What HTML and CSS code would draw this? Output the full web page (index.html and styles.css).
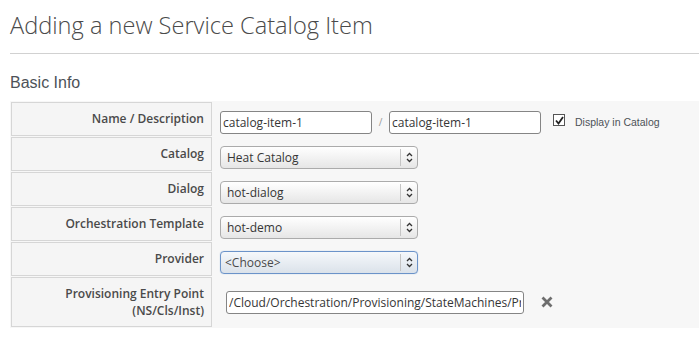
FILE: index.html
```html
<!DOCTYPE html>
<html lang="en">
<head>
    <meta charset="UTF-8">
    <title>Adding a new Service Catalog Item</title>
    <link rel="stylesheet" href="styles.css">
</head>
<body>
    <div class="page">
        <h1 class="page-title">Adding a new Service Catalog Item</h1>

        <h3 class="section-title">Basic Info</h3>

        <table class="form-table">
            <tr>
                <td class="key">Name / Description</td>
                <td class="value">
                    <div class="field-row">
                        <input class="text-input short" type="text" value="catalog-item-1">
                        <span class="slash">/</span>
                        <input class="text-input short" type="text" value="catalog-item-1">
                        <span class="checkbox"><svg width="9" height="9" viewBox="0 0 9 9"><path d="M1 4.5 L3.5 7.5 L8 1" fill="none" stroke="#222" stroke-width="1.8"/></svg></span>
                        <span class="checkbox-label">Display in Catalog</span>
                    </div>
                </td>
            </tr>
            <tr>
                <td class="key">Catalog</td>
                <td class="value">
                    <div class="select-box">
                        <span class="select-text">Heat Catalog</span>
                        <span class="select-arrow"><svg width="7" height="11" viewBox="0 0 7 11"><path d="M1 4 L3.5 1.5 L6 4 M1 7 L3.5 9.5 L6 7" fill="none" stroke="#333" stroke-width="1.3"/></svg></span>
                    </div>
                </td>
            </tr>
            <tr>
                <td class="key">Dialog</td>
                <td class="value">
                    <div class="select-box">
                        <span class="select-text">hot-dialog</span>
                        <span class="select-arrow"><svg width="7" height="11" viewBox="0 0 7 11"><path d="M1 4 L3.5 1.5 L6 4 M1 7 L3.5 9.5 L6 7" fill="none" stroke="#333" stroke-width="1.3"/></svg></span>
                    </div>
                </td>
            </tr>
            <tr>
                <td class="key">Orchestration Template</td>
                <td class="value">
                    <div class="select-box">
                        <span class="select-text">hot-demo</span>
                        <span class="select-arrow"><svg width="7" height="11" viewBox="0 0 7 11"><path d="M1 4 L3.5 1.5 L6 4 M1 7 L3.5 9.5 L6 7" fill="none" stroke="#333" stroke-width="1.3"/></svg></span>
                    </div>
                </td>
            </tr>
            <tr>
                <td class="key">Provider</td>
                <td class="value">
                    <div class="select-box focused">
                        <span class="select-text">&lt;Choose&gt;</span>
                        <span class="select-arrow"><svg width="7" height="11" viewBox="0 0 7 11"><path d="M1 4 L3.5 1.5 L6 4 M1 7 L3.5 9.5 L6 7" fill="none" stroke="#333" stroke-width="1.3"/></svg></span>
                    </div>
                </td>
            </tr>
            <tr class="tall">
                <td class="key">Provisioning Entry Point<br>(NS/Cls/Inst)</td>
                <td class="value">
                    <div class="field-row entry-point">
                        <input class="text-input long" type="text" value="/Cloud/Orchestration/Provisioning/StateMachines/Provision/CatalogItemInitialization">
                        <span class="clear-icon"><svg width="12" height="12" viewBox="0 0 12 12"><path d="M1.5 1.5 L10.5 10.5 M10.5 1.5 L1.5 10.5" stroke="#6e6e6e" stroke-width="2.8"/></svg></span>
                    </div>
                </td>
            </tr>
        </table>
    </div>
</body>
</html>
```

FILE: styles.css
```css
* {
    box-sizing: border-box;
}

body {
    margin: 0;
    background: #fff;
    color: #363636;
    font-family: 'Open Sans', 'Liberation Sans', sans-serif;
    font-size: 12px;
}

.page {
    padding-left: 10px;
}

.page-title {
    margin: 0;
    padding: 12px 0 15px;
    font-size: 23.6px;
    font-weight: 300;
    line-height: 26px;
    color: #4a4a4a;
    border-bottom: 1px solid #d1d1d1;
}

.section-title {
    margin: 19px 0 8px;
    font-family: 'Liberation Sans', Arial, sans-serif;
    font-size: 16px;
    font-weight: 400;
    line-height: 20px;
    color: #4d5258;
}

.form-table {
    width: 100%;
    border-collapse: separate;
    border-spacing: 1px;
    background: #f7f7f7;
}

.form-table td {
    padding: 0;
}

.form-table .key {
    width: 201px;
    height: 34px;
    padding: 7px 7px 8px;
    border: 1px solid #d6d6d6;
    background: #f5f5f5;
    text-align: right;
    vertical-align: top;
    font-weight: 600;
    line-height: 17px;
    color: #4a4a4a;
}

.form-table .value {
    padding: 9px 7px 2px;
    vertical-align: top;
}

.form-table .tall .key {
    padding-bottom: 7px;
}

.form-table .tall .value {
    padding: 2px 7px;
    vertical-align: middle;
}

.field-row {
    display: flex;
    align-items: flex-start;
}

.text-input {
    height: 23px;
    padding: 0 2px;
    border: 1px solid #858585;
    border-radius: 3px;
    background: #fff;
    font-family: 'Open Sans', sans-serif;
    font-size: 12px;
    color: #363636;
    outline: none;
}

.text-input.short {
    width: 152px;
}

.text-input.long {
    width: 298px;
}

.slash {
    width: 17px;
    text-align: center;
    font-size: 10px;
    line-height: 23px;
    color: #999;
}

.checkbox {
    display: flex;
    align-items: center;
    justify-content: center;
    width: 12px;
    height: 12px;
    margin: 3px 10px 0 12px;
    border: 1px solid #555;
    background: #fff;
}

.checkbox-label {
    margin-top: 4px;
    font-family: 'Liberation Sans', Arial, sans-serif;
    font-size: 10.5px;
    line-height: 14px;
    color: #4d5258;
}

.select-box {
    display: flex;
    width: 198px;
    height: 23px;
    border: 1px solid #ababab;
    border-radius: 4px;
    background: linear-gradient(#ffffff, #e6e6e6);
    line-height: 21px;
}

.select-box.focused {
    border-color: #6b93c9;
    background: linear-gradient(#f5f8fb, #dbe2ea);
    box-shadow: 0 0 1px #8fb4e0;
}

.select-text {
    flex: 1;
    padding-left: 6px;
    color: #363636;
}

.select-box.focused .select-text {
    padding-left: 4px;
    color: #4a4a4a;
}

.select-arrow {
    display: flex;
    align-items: center;
    justify-content: center;
    width: 17px;
    margin: 2px 0;
    border-left: 1px solid #c4c4c4;
}

.entry-point {
    align-items: center;
    padding-left: 6px;
}

.clear-icon {
    display: flex;
    margin-left: 17px;
}
```
